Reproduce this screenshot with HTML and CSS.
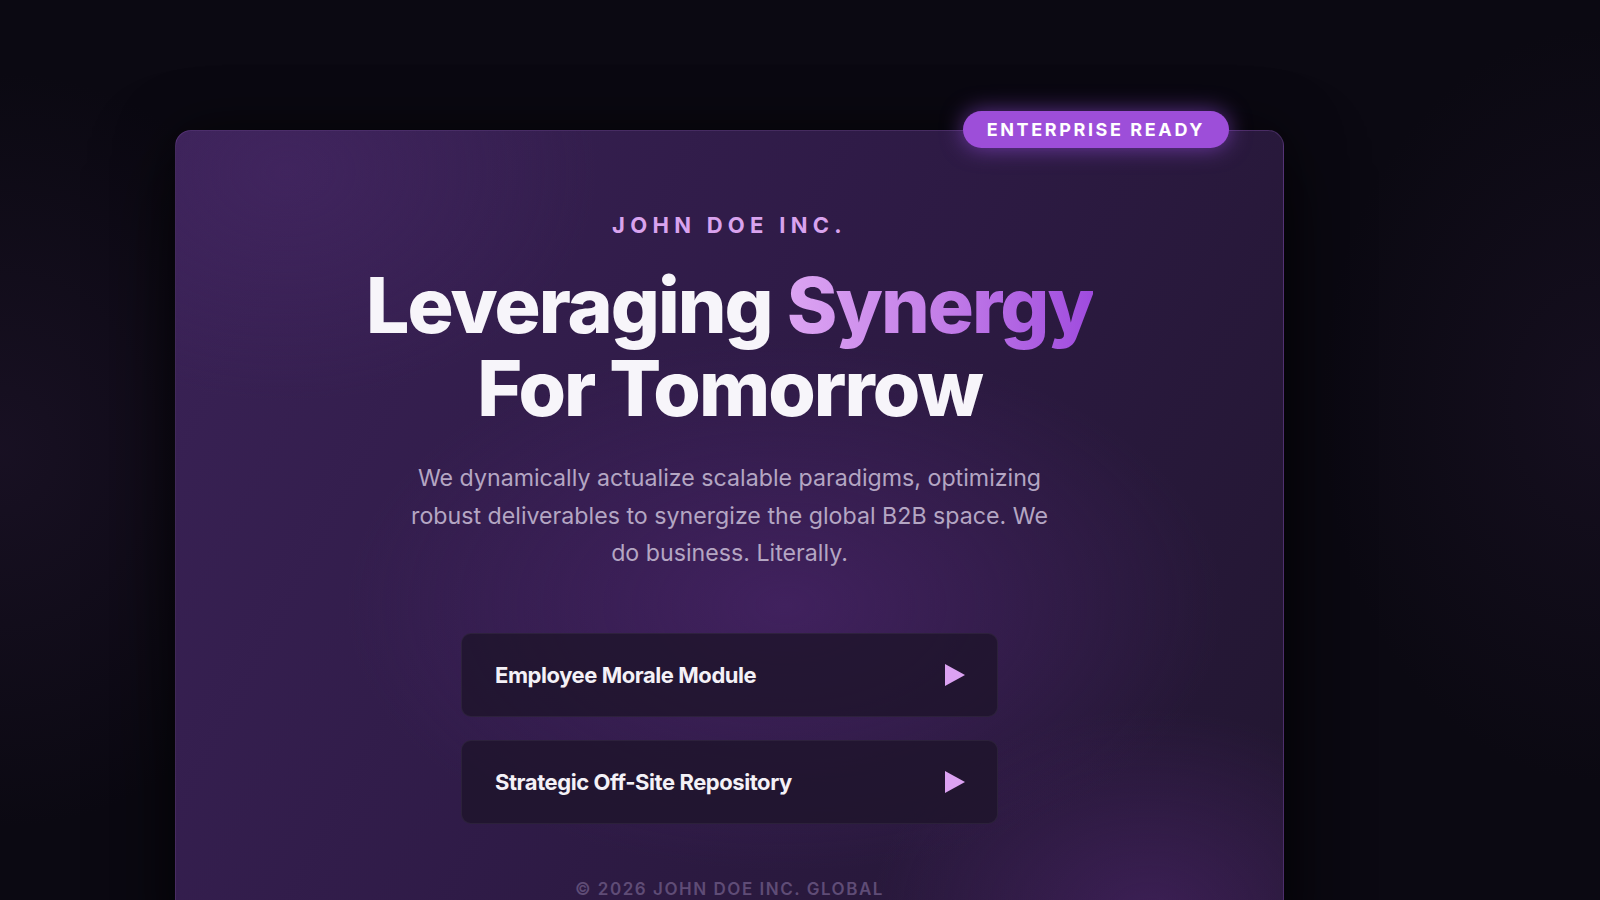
FILE: index.html
```html
<!DOCTYPE html>
<html lang="en">
<head>
<meta charset="utf-8">
<title>John Doe Inc.</title>
<link rel="stylesheet" href="styles.css">
</head>
<body>
<div class="stage">
  <section class="card">
    <span class="badge">ENTERPRISE READY</span>
    <p class="eyebrow">JOHN DOE INC.</p>
    <h1 class="title">Leveraging <span class="accent">Synergy</span><br>For Tomorrow</h1>
    <p class="lead">We dynamically actualize scalable paradigms, optimizing robust deliverables to synergize the global B2B space. We do business. Literally.</p>
    <div class="actions">
      <button class="action" type="button">
        <span>Employee Morale Module</span>
        <svg class="play" viewBox="0 0 20 22" width="20" height="22"><path d="M0 0 L20 11 L0 22 Z"/></svg>
      </button>
      <button class="action" type="button">
        <span>Strategic Off-Site Repository</span>
        <svg class="play" viewBox="0 0 20 22" width="20" height="22"><path d="M0 0 L20 11 L0 22 Z"/></svg>
      </button>
    </div>
    <p class="footer">© 2026 JOHN DOE INC. GLOBAL</p>
  </section>
</div>
</body>
</html>
```
FILE: styles.css
```css
* { box-sizing: border-box; }
html, body { margin: 0; height: 100%; }
body {
  background:
    radial-gradient(ellipse 30% 60% at 0% 50%, rgba(40, 25, 55, 0.45), transparent 70%),
    radial-gradient(ellipse 25% 60% at 100% 45%, rgba(40, 25, 55, 0.35), transparent 70%),
    #0b0912;
  font-family: Inter, "Noto Sans", sans-serif;
  overflow: hidden;
}
.stage {
  padding: 130px 0 0 175px;
}
.card {
  position: relative;
  width: 1109px;
  min-height: 820px;
  border-radius: 16px;
  border: 1px solid rgba(170, 110, 220, 0.22);
  background:
    radial-gradient(ellipse 55% 45% at 55% 58%, rgba(78, 38, 112, 0.6), transparent 72%),
    radial-gradient(ellipse 35% 35% at 88% 96%, rgba(80, 38, 112, 0.55), transparent 72%),
    radial-gradient(ellipse 40% 40% at 10% 5%, rgba(72, 40, 104, 0.5), transparent 70%),
    linear-gradient(118deg, #3a2256 0%, #2f1b47 45%, #21162f 100%);
  box-shadow: 0 30px 80px rgba(0, 0, 0, 0.6), 0 0 60px rgba(0, 0, 0, 0.45);
  display: flex;
  flex-direction: column;
  align-items: center;
  padding-top: 79px;
}
.badge {
  position: absolute;
  top: -20px;
  right: 54px;
  height: 37px;
  padding: 0 24px;
  display: flex;
  align-items: center;
  border-radius: 19px;
  background: #9d4ed9;
  color: #ffffff;
  font-size: 18px;
  font-weight: 700;
  letter-spacing: 0.145em;
  box-shadow: 0 0 22px rgba(168, 85, 247, 0.55);
}
.eyebrow {
  margin: 0;
  color: #d9a3ee;
  font-size: 22px;
  font-weight: 700;
  letter-spacing: 0.24em;
  line-height: 30px;
}
.title {
  margin: 24px 0 0;
  text-align: center;
  color: #f7f5fa;
  font-size: 76.8px;
  font-weight: 800;
  line-height: 83px;
  letter-spacing: -0.025em;
}
.accent {
  background: linear-gradient(90deg, #dca4f2 0%, #c37ee8 50%, #9f4bde 100%);
  -webkit-background-clip: text;
  background-clip: text;
  color: transparent;
}
.lead {
  margin: 30px 0 0;
  width: 662px;
  text-align: center;
  color: #b4a6c3;
  font-size: 23.2px;
  line-height: 37.7px;
}
.actions {
  margin-top: 60px;
  display: flex;
  flex-direction: column;
  gap: 23px;
}
.action {
  width: 537px;
  height: 84px;
  padding: 0 32px 0 33px;
  display: flex;
  align-items: center;
  justify-content: space-between;
  border-radius: 10px;
  border: 1px solid rgba(255, 255, 255, 0.05);
  background: rgba(30, 20, 43, 0.8);
  color: #f4f1f7;
  font-family: Inter, "Noto Sans", sans-serif;
  font-size: 22px;
  font-weight: 700;
  letter-spacing: -0.02em;
  cursor: pointer;
}
.play { fill: #dca2f2; }
.footer {
  margin: 55px 0 0;
  color: #5f4c76;
  font-size: 17px;
  font-weight: 600;
  letter-spacing: 0.09em;
}
```
